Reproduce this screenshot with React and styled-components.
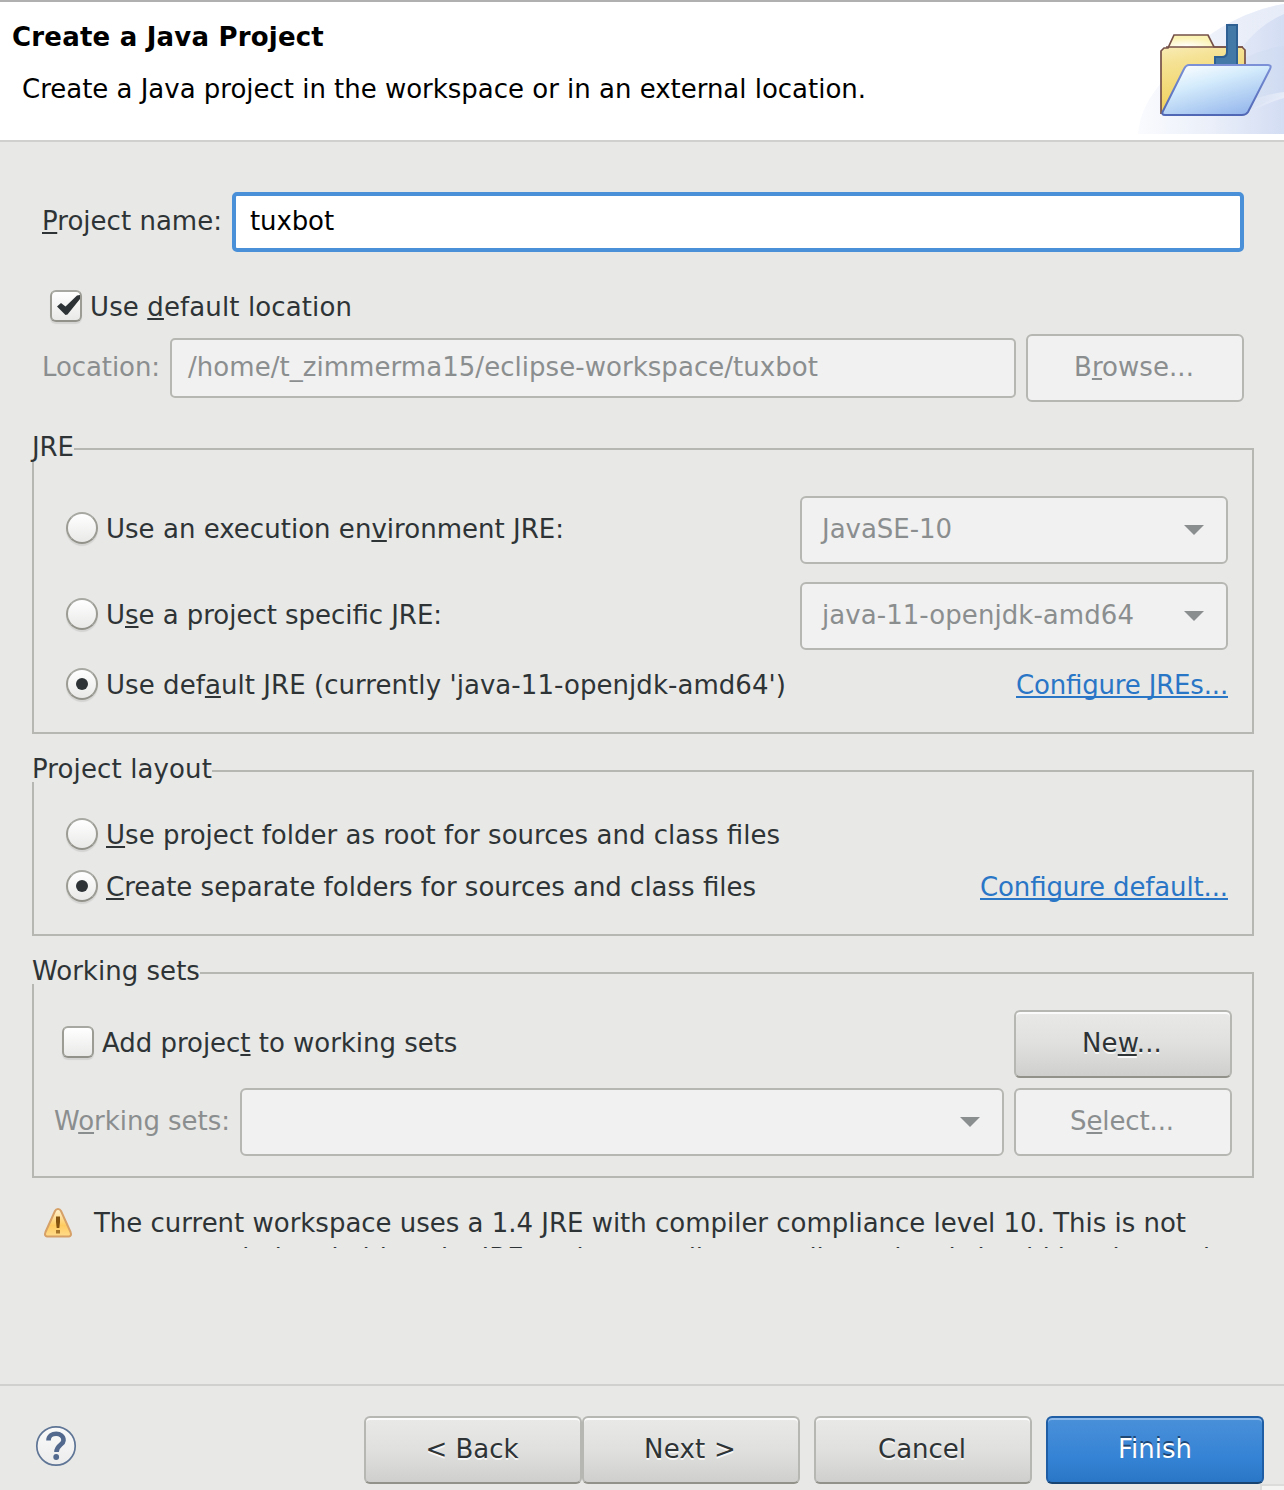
import React from "react";
import styled, { createGlobalStyle, css } from "styled-components";

const Global = createGlobalStyle`
  * { box-sizing: border-box; }
  html, body { margin: 0; background: #e8e8e6; }
`;

const color = {
  bg: "#e8e8e6",
  text: "#2e3436",
  muted: "#8b8e8f",
  insensitive: "#f1f1f1",
  border: "#b6b6b3",
  link: "#2a76c6",
};

/* ---------- text ---------- */

const Text = styled.span`
  white-space: pre;
  letter-spacing: ${(p) => p.$track ?? 0}px;
  font-feature-settings: "liga" 1;
`;

const Mnemonic = styled.span`
  text-decoration: underline;
  text-decoration-thickness: 2px;
  text-underline-offset: 2px;
  text-decoration-skip-ink: none;
`;

/* "&" marks the character that follows as the keyboard mnemonic */
function Label({ children, track }) {
  const at = children.indexOf("&");
  if (at < 0) return <Text $track={track}>{children}</Text>;
  return (
    <Text $track={track}>
      {children.slice(0, at)}
      <Mnemonic>{children[at + 1]}</Mnemonic>
      {children.slice(at + 2)}
    </Text>
  );
}

/* ---------- window and header ---------- */

const Window = styled.div`
  width: 1284px;
  height: 1490px;
  display: flex;
  flex-direction: column;
  overflow: hidden;
  background: ${color.bg};
  color: ${color.text};
  font: 26px/32px "DejaVu Sans", sans-serif;
`;

const Header = styled.header`
  display: flex;
  justify-content: space-between;
  height: 142px;
  flex: none;
  background: #fff;
  color: #000;
  border-top: 2px solid #b0b0b0;
  border-bottom: 2px solid #d0d0ce;
`;

const HeaderText = styled.div`
  display: flex;
  flex-direction: column;
  gap: 20px;
  padding: 19px 0 0 12px;
`;

const Title = styled.h1`
  margin: 0;
  font-size: inherit;
  line-height: inherit;
  font-weight: bold;
`;

const Subtitle = styled.p`
  margin: 0 0 0 10px;
`;

const Banner = styled.svg`
  display: block;
  width: 146px;
  height: 132px;
`;

/* ---------- form ---------- */

const Content = styled.main`
  flex: 1;
  display: flex;
  flex-direction: column;
  padding: 50px 30px 0 32px;
`;

const Row = styled.div`
  display: flex;
  align-items: center;
  height: ${(p) => p.$h}px;
  margin-top: ${(p) => p.$mt ?? 0}px;
  padding-left: ${(p) => p.$pl ?? 0}px;
  padding-right: ${(p) => p.$pr ?? 0}px;
`;

const FieldLabel = styled.label`
  width: ${(p) => p.$w}px;
  flex: none;
  margin-top: -2px;
  color: ${(p) => (p.$disabled ? color.muted : color.text)};
`;

const Field = styled.div`
  flex: 1;
  display: flex;
  align-items: center;
  height: 60px;
  border-radius: 5px;
  padding-bottom: 2px;
  ${(p) =>
    p.$disabled
      ? css`
          background: ${color.insensitive};
          border: 2px solid ${color.border};
          color: ${color.muted};
          padding-left: 16px;
        `
      : css`
          background: #fff;
          border: 4px solid #4a90d9;
          color: #000;
          padding-left: 14px;
        `}
`;

const Button = styled.button`
  flex: none;
  display: flex;
  align-items: center;
  justify-content: center;
  width: 218px;
  height: 68px;
  padding: 0 2px 2px 0;
  margin: 0 0 0 ${(p) => p.$ml ?? 0}px;
  font: inherit;
  border-radius: 6px;
  color: ${color.text};
  border: 2px solid ${color.border};
  border-bottom-color: #92928a;
  background: linear-gradient(#e9e9e8, #e0e0df 50%, #cfcfcd);
  box-shadow: inset 0 2px #fbfbfb;
  text-shadow: 0 2px rgba(255, 255, 255, 0.77);
  ${(p) =>
    p.$primary &&
    css`
      padding-right: 0;
      color: #fff;
      border-color: #1f5da5;
      border-bottom-color: #184472;
      background: linear-gradient(#4a90d9, #3583d5 62%, #2a76c6);
      box-shadow: inset 0 2px #8cb8ea;
      text-shadow: 0 -2px rgba(20, 50, 85, 0.77);
    `}
  &:disabled {
    color: ${color.muted};
    border-color: ${color.border};
    background: ${color.insensitive};
    box-shadow: none;
    text-shadow: none;
  }
`;

const Combo = styled.div`
  display: flex;
  align-items: center;
  justify-content: space-between;
  flex: ${(p) => (p.$w ? "none" : 1)};
  width: ${(p) => (p.$w ? p.$w + "px" : "auto")};
  height: 68px;
  padding: 0 22px 2px 20px;
  border: 2px solid ${color.border};
  border-radius: 6px;
  background: ${color.insensitive};
  color: ${color.muted};
`;

const Arrow = styled.i`
  margin: 2px 0 0 auto;
  border: 10px solid transparent;
  border-top-color: ${color.muted};
  border-bottom-width: 0;
`;

const Group = styled.section`
  width: 1222px;
  height: ${(p) => p.$h}px;
  margin-top: ${(p) => p.$mt}px;
  border: 2px solid ${color.border};
`;

const Legend = styled.h2`
  width: ${(p) => p.$w}px;
  height: 24px;
  margin: -14px 0 0 -2px;
  font: inherit;
  line-height: 22px;
  background: ${color.bg};
`;

const Choice = styled.label`
  display: flex;
  align-items: center;
  flex: 1;
  gap: 8px;
  height: 34px;
  margin-bottom: ${(p) => (p.$raised ? 4 : 0)}px;
`;

const ChoiceText = styled.span`
  margin-top: 1px;
`;

const indicator = css`
  flex: none;
  display: flex;
  align-items: center;
  justify-content: center;
  width: 32px;
  height: 32px;
  border: 2px solid #9a9a93;
  border-color: #a8a8a2 #9c9c95 #92928a;
  background: linear-gradient(#fff, #e9e9e8);
  box-shadow: 0 2px 1px rgba(0, 0, 0, 0.09);
`;

const Radio = styled.span`
  ${indicator}
  border-radius: 50%;
  &::after {
    content: "";
    width: 12px;
    height: 12px;
    border-radius: 50%;
    background: ${(p) => (p.$on ? color.text : "transparent")};
  }
`;

const Check = styled.span`
  ${indicator}
  border-radius: 6px;
`;

const Link = styled.a`
  margin-top: 2px;
  color: ${color.link};
  text-decoration: underline;
  text-decoration-thickness: 2px;
  text-underline-offset: 2px;
  text-decoration-skip-ink: none;
`;

const Warning = styled.div`
  display: flex;
  height: 42px;
  margin-top: 28px;
  padding-left: 10px;
  overflow: hidden;
`;

const WarningText = styled.p`
  margin: 0 0 0 20px;
  line-height: 34px;
`;

const Line = styled.span`
  display: block;
  & + & {
    margin-top: 1px;
  }
`;

/* ---------- footer ---------- */

const Footer = styled.footer`
  display: flex;
  align-items: flex-start;
  height: 106px;
  padding: 30px 20px 0 34px;
  border-top: 2px solid #d0d0ce;
`;

const HelpIcon = styled.svg`
  width: 44px;
  height: 44px;
  margin: 8px auto 0 0;
`;

const Corner = styled.div`
  position: absolute;
  left: 1260px;
  top: 1484px;
  width: 24px;
  height: 6px;
  background: #f4f4f3;
  border-top: 2px solid #dcdcda;
  border-left: 2px solid #dcdcda;
`;

function FolderBanner() {
  return (
    <Banner viewBox="1138 2 146 132">
      <defs>
        <linearGradient id="sky" x1="0" x2="1">
          <stop offset="0" stopColor="#fafbfe" />
          <stop offset="0.5" stopColor="#eaeff9" />
          <stop offset="1" stopColor="#d3ddf3" />
        </linearGradient>
        <linearGradient id="glow" x1="0" x2="1">
          <stop offset="0" stopColor="#fff" stopOpacity="0" />
          <stop offset="1" stopColor="#fff" stopOpacity="0.45" />
        </linearGradient>
        <linearGradient id="back" x1="0.3" y1="0" x2="0.5" y2="1">
          <stop offset="0" stopColor="#fbf0c4" />
          <stop offset="0.3" stopColor="#f5e294" />
          <stop offset="1" stopColor="#efcd52" />
        </linearGradient>
        <radialGradient id="tab" cx="0.4" cy="0.95" r="0.7">
          <stop offset="0" stopColor="#fff" />
          <stop offset="1" stopColor="#fbf3b4" />
        </radialGradient>
        <linearGradient id="front" x1="0.1" y1="0" x2="0.75" y2="1.1">
          <stop offset="0" stopColor="#fff" />
          <stop offset="0.35" stopColor="#d5ecfc" />
          <stop offset="1" stopColor="#8db0ea" />
        </linearGradient>
        <linearGradient id="edge" x1="0" y1="0" x2="0" y2="1">
          <stop offset="0" stopColor="#7b90d6" />
          <stop offset="1" stopColor="#5067b5" />
        </linearGradient>
      </defs>
      <path d="M1138 134C1140 112 1150 96 1162 82C1186 50 1226 14 1284 4V134Z" fill="url(#sky)" />
      <path d="M1162 82C1186 50 1226 14 1284 4V14C1262 24 1248 38 1236 56Z" fill="url(#glow)" />
      <path d="M1284 46C1268 48 1254 53 1240 60V112L1250 110C1262 104 1272 99 1284 95Z" fill="#c9d6f1" opacity="0.25" />
      <path d="M1284 92C1274 93 1262 96 1252 100L1246 113C1258 108 1270 102 1284 98Z" fill="url(#glow)" />
      <path d="M1161 114V51L1164 48H1168L1174 35H1208L1214 47H1242L1245 50V70L1200 114Z" fill="url(#back)" />
      <path d="M1168 47L1174 35H1208L1214 47Z" fill="url(#tab)" />
      <path d="M1161 114V51L1164 48H1168L1174 35H1208L1214 47H1242L1245 50V66" fill="none" stroke="#765149" strokeWidth="1.700" />
      <path d="M1166 47H1243" stroke="#765149" strokeWidth="1.700" />
      <path d="M1227 25H1237V66H1215V57H1222Q1227 57 1227 52Z" fill="#4279a7" stroke="#2e6093" strokeWidth="2" />
      <path d="M1189 65H1268Q1272 65 1270 69L1248 112Q1246 115 1242 115H1165Q1161 115 1163 111L1184 69Q1186 65 1189 65Z" fill="url(#front)" stroke="url(#edge)" strokeWidth="2" />
    </Banner>
  );
}

/* sits in the 28px inner area of the checkbox */
function CheckMark() {
  return (
    <svg width="28" height="28" viewBox="0 0 28 28">
      <path d="M5 14.500L9 11L13.500 14.500L25 3.500L28 3V7L15.500 22.500L13.500 23Z" fill={color.text} />
    </svg>
  );
}

function WarningSign() {
  return (
    <svg width="32" height="34" viewBox="0 0 32 34">
      <defs>
        <linearGradient id="amber" x1="0" y1="0" x2="0" y2="1">
          <stop offset="0" stopColor="#fff3d2" />
          <stop offset="0.6" stopColor="#ffcb60" />
          <stop offset="1" stopColor="#ffdc8c" />
        </linearGradient>
      </defs>
      <path d="M16 3Q18 3 19 5L28.500 26Q30 30 27 30.500H5Q2 30 3.500 26L13 5Q14 3 16 3Z" fill="url(#amber)" stroke="#d6a066" strokeWidth="2" />
      <path d="M14 10.500H18V16L17.300 22H14.700L14 16Z" fill="#84520f" />
      <rect x="14" y="24" width="4" height="3.500" fill="#a9772c" />
    </svg>
  );
}

function Help() {
  return (
    <HelpIcon viewBox="34 1424 44 44">
      <defs>
        <linearGradient id="disc" x1="0" y1="0" x2="0" y2="1">
          <stop offset="0" stopColor="#fafafb" />
          <stop offset="1" stopColor="#ececec" />
        </linearGradient>
      </defs>
      <circle cx="56" cy="1446" r="19.200" fill="url(#disc)" stroke="#5f7596" strokeWidth="1.700" />
      <path d="M48.500 1440.500C48.500 1431.500 64 1431.500 63.500 1440.500C63.300 1445 56.500 1445 56.500 1452" fill="none" stroke="#53698d" strokeWidth="4.600" />
      <circle cx="56.200" cy="1457" r="2.900" fill="#53698d" />
    </HelpIcon>
  );
}

function RadioChoice({ on, raised, track, children }) {
  return (
    <Choice $raised={raised}>
      <Radio $on={on} />
      <ChoiceText>
        <Label track={track}>{children}</Label>
      </ChoiceText>
    </Choice>
  );
}

export default function App() {
  return (
    <Window>
      <Global />
      <Header>
        <HeaderText>
          <Title><Label track={0.205}>Create a Java Project</Label></Title>
          <Subtitle>
            <Label track={-0.016}>Create a Java project in the workspace or in an external location.</Label>
          </Subtitle>
        </HeaderText>
        <FolderBanner />
      </Header>

      <Content>
        <Row $h={60} $pl={10} $pr={10}>
          <FieldLabel $w={190}><Label track={0.022}>&Project name:</Label></FieldLabel>
          <Field><Label track={-0.112}>tuxbot</Label></Field>
        </Row>
        <Row $h={34} $mt={37} $pl={18}>
          <Choice>
            <Check><CheckMark /></Check>
            <ChoiceText><Label track={0.113}>Use &default location</Label></ChoiceText>
          </Choice>
        </Row>
        <Row $h={68} $mt={11} $pl={10} $pr={10}>
          <FieldLabel $w={128} $disabled><Label track={-0.082}>Location:</Label></FieldLabel>
          <Field $disabled><Label track={0.045}>/home/t_zimmerma15/eclipse-workspace/tuxbot</Label></Field>
          <Button disabled $ml={10}><Label track={0.059}>B&rowse...</Label></Button>
        </Row>

        <Group $h={286} $mt={46}>
          <Legend $w={42}><Label track={-0.057}>JRE</Label></Legend>
          <Row $h={68} $mt={36} $pl={32} $pr={24}>
            <RadioChoice raised track={0.023}>Use an execution en&vironment JRE:</RadioChoice>
            <Combo $w={428}><Label track={-0.036}>JavaSE-10</Label><Arrow /></Combo>
          </Row>
          <Row $h={68} $mt={18} $pl={32} $pr={24}>
            <RadioChoice raised track={-0.037}>U&se a project specific JRE:</RadioChoice>
            <Combo $w={428}><Label track={0.061}>java-11-openjdk-amd64</Label><Arrow /></Combo>
          </Row>
          <Row $h={34} $mt={17} $pl={32} $pr={24}>
            <RadioChoice on track={0.059}>Use def&ault JRE (currently 'java-11-openjdk-amd64')</RadioChoice>
            <Link><Label track={-0.174}>Configure JREs...</Label></Link>
          </Row>
        </Group>

        <Group $h={166} $mt={36}>
          <Legend $w={180}><Label track={0.118}>Project layout</Label></Legend>
          <Row $h={34} $mt={35} $pl={32}>
            <RadioChoice track={0.028}>&Use project folder as root for sources and class files</RadioChoice>
          </Row>
          <Row $h={34} $mt={18} $pl={32} $pr={24}>
            <RadioChoice on track={-0.006}>&Create separate folders for sources and class files</RadioChoice>
            <Link><Label track={-0.135}>Configure default...</Label></Link>
          </Row>
        </Group>

        <Group $h={206} $mt={36}>
          <Legend $w={168}><Label track={0.03}>Working sets</Label></Legend>
          <Row $h={68} $mt={26} $pl={28} $pr={20}>
            <Choice $raised>
              <Check />
              <ChoiceText><Label track={-0.03}>Add projec&t to working sets</Label></ChoiceText>
            </Choice>
            <Button><Label track={0.15}>Ne&w...</Label></Button>
          </Row>
          <Row $h={68} $mt={10} $pl={20} $pr={20}>
            <FieldLabel $w={186} $disabled><Label track={-0.03}>W&orking sets:</Label></FieldLabel>
            <Combo><Arrow /></Combo>
            <Button disabled $ml={10}><Label track={-0.113}>S&elect...</Label></Button>
          </Row>
        </Group>

        <Warning>
          <WarningSign />
          <WarningText>
            <Line><Label track={-0.015}>The current workspace uses a 1.4 JRE with compiler compliance level 10. This is not</Label></Line>
            <Line><Label track={-0.077}>recommended and either the JRE or the compiler compliance level should be changed</Label></Line>
          </WarningText>
        </Warning>
      </Content>

      <Footer>
        <Help />
        <Button><Label track={0}>{"< Back"}</Label></Button>
        <Button><Label track={0.229}>{"Next >"}</Label></Button>
        <Button $ml={14}><Label track={-0.016}>Cancel</Label></Button>
        <Button $primary $ml={14}><Label>Finish</Label></Button>
      </Footer>
      <Corner />
    </Window>
  );
}
